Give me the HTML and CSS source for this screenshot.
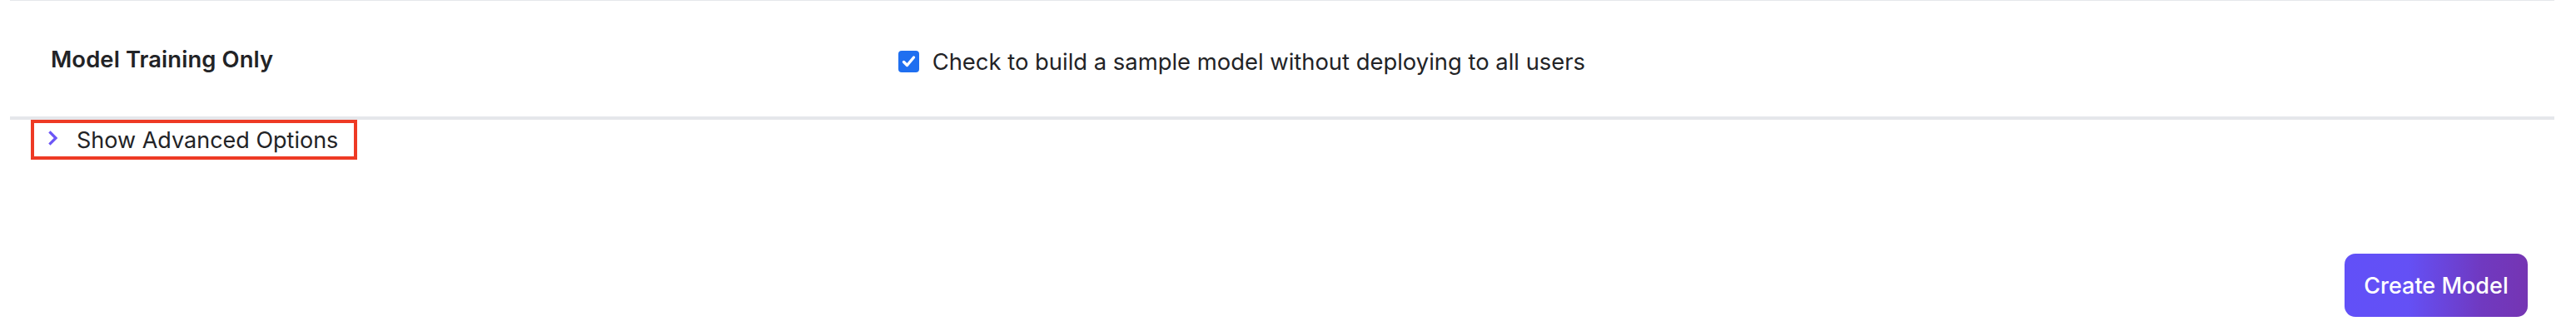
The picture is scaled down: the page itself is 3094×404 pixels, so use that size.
FILE: index.html
```html
<!DOCTYPE html>
<html lang="en">
<head>
<meta charset="utf-8">
<title>Create Model</title>
<link rel="stylesheet" href="styles.css">
</head>
<body>
<div class="page">
  <div class="form-row">
    <div class="form-label">Model Training Only</div>
    <label class="form-field">
      <span class="checkbox" aria-checked="true" role="checkbox">
        <svg viewBox="0 0 25 26" width="25" height="26"><path d="M6.5 13.5 L10.5 17.5 L18.5 8" fill="none" stroke="#fff" stroke-width="3.4" stroke-linecap="round" stroke-linejoin="round"/></svg>
      </span>
      <span class="field-text">Check to build a sample model without deploying to all users</span>
    </label>
  </div>
  <div class="advanced">
    <button class="advanced-toggle" type="button">
      <svg class="chevron" viewBox="0 0 12 18" width="12" height="18"><path d="M2.5 2.5 L9 9 L2.5 15.5" fill="none" stroke="#6b55f6" stroke-width="3.2" stroke-linecap="square" stroke-linejoin="miter"/></svg>
      <span>Show Advanced Options</span>
    </button>
  </div>
  <div class="actions">
    <button class="primary" type="button">Create Model</button>
  </div>
</div>
</body>
</html>
```

FILE: styles.css
```css
* { box-sizing: border-box; }

html, body {
  margin: 0;
  padding: 0;
  background: #ffffff;
}

body {
  font-family: Inter, "Noto Sans", "Liberation Sans", sans-serif;
  color: #1f1f22;
}

.page {
  padding: 0 26px 0 12px;
}

.form-row {
  display: grid;
  grid-template-columns: 1fr 2fr;
  align-items: center;
  height: 144px;
  border-top: 1px solid #e5e7eb;
  border-bottom: 4px solid #e5e7eb;
}

.form-label {
  padding-left: 49px;
  font-size: 27.4px;
  font-weight: 600;
  color: #222326;
  letter-spacing: 0.1px;
}

.form-field {
  display: flex;
  align-items: center;
  gap: 16px;
  padding-left: 48px;
  margin-top: 6px;
}

.checkbox {
  display: flex;
  width: 25px;
  height: 26px;
  border-radius: 4px;
  background: #1f6ff0;
}

.field-text {
  font-size: 27.4px;
  color: #222326;
}

.advanced {
  display: flex;
  padding-left: 25px;
}

.advanced-toggle {
  display: flex;
  align-items: center;
  gap: 22px;
  width: 392px;
  height: 48px;
  padding: 0 0 0 17px;
  margin: 0;
  border: 4px solid #ee3a24;
  background: #ffffff;
  font-family: inherit;
  font-size: 27px;
  color: #222326;
  cursor: pointer;
}

.chevron {
  margin-top: -4px;
}

.actions {
  display: flex;
  justify-content: flex-end;
  padding-top: 113px;
  padding-right: 32px;
}

.primary {
  width: 220px;
  height: 76px;
  border: none;
  border-radius: 13px;
  background: linear-gradient(90deg, #6150f8 0%, #6450f5 35%, #7039c0 75%, #7535b3 100%);
  color: #ffffff;
  font-family: inherit;
  font-size: 27px;
  font-weight: 500;
  cursor: pointer;
}
```
